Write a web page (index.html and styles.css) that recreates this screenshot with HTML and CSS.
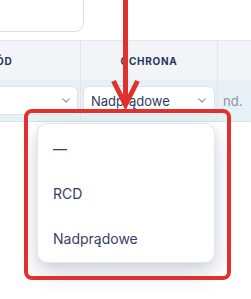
FILE: index.html
```html
<!DOCTYPE html>
<html lang="pl">
<head>
    <meta charset="UTF-8">
    <meta name="viewport" content="width=device-width, initial-scale=1.0">
    <title>Ochrona - wybór</title>
    <link rel="stylesheet" href="styles.css">
</head>
<body>

<div class="page">
    <div class="top-card"></div>

    <div class="table">
        <div class="thead">
            <div class="th col-circuit">Obwód</div>
            <div class="th col-protect">Ochrona</div>
            <div class="th col-rest"></div>
        </div>
        <div class="trow">
            <div class="td col-circuit">
                <div class="select">
                    <span class="select-value"></span>
                    <svg class="chevron" width="8" height="5" viewBox="0 0 8 5"><path d="M0.8 0.8 L4 4 L7.2 0.8" fill="none" stroke="#8d9ab2" stroke-width="1.2" stroke-linecap="round" stroke-linejoin="round"/></svg>
                </div>
            </div>
            <div class="td col-protect">
                <div class="select">
                    <span class="select-value">Nadprądowe</span>
                    <svg class="chevron" width="8" height="5" viewBox="0 0 8 5"><path d="M0.8 0.8 L4 4 L7.2 0.8" fill="none" stroke="#8d9ab2" stroke-width="1.2" stroke-linecap="round" stroke-linejoin="round"/></svg>
                </div>
            </div>
            <div class="td col-rest">
                <span class="muted">nd.</span>
            </div>
        </div>
    </div>

    <!-- open dropdown of the "Ochrona" select -->
    <ul class="menu">
        <li class="menu-item">—</li>
        <li class="menu-item">RCD</li>
        <li class="menu-item">Nadprądowe</li>
    </ul>

    <!-- annotation overlay -->
    <div class="callout"></div>
    <svg class="arrow" width="34" height="112" viewBox="0 0 34 112">
        <line x1="15.5" y1="0" x2="15.5" y2="104" stroke="#e0312f" stroke-width="5"/>
        <polyline points="3.5,81 15.5,105 27.5,81" fill="none" stroke="#e0312f" stroke-width="5" stroke-linejoin="miter"/>
    </svg>
</div>

</body>
</html>
```

FILE: styles.css
```css
body {
    margin: 0;
    background-color: #ffffff;
    font-family: 'Inter', 'Noto Sans', sans-serif;
}

.page {
    position: relative;
    width: 251px;
    height: 299px;
    overflow: hidden;
}

.top-card {
    box-sizing: border-box;
    width: 200px;
    height: 42px;
    margin: -10px 0 8px -116px;
    background-color: #ffffff;
    border: 1px solid #d9dfe8;
    border-radius: 9px;
}

.table {
    margin-left: -98px;
    width: 420px;
}

.thead,
.trow {
    display: flex;
}

.thead {
    box-sizing: border-box;
    height: 40px;
    background-color: #f2f4f8;
    border-top: 1px solid #e3e7ee;
}

.col-circuit {
    box-sizing: border-box;
    width: 179px;
    border-right: 1px solid #e1e6ed;
}

.col-protect {
    box-sizing: border-box;
    width: 137px;
    border-right: 1px solid #e1e6ed;
}

.col-rest {
    flex: 1;
}

.th {
    display: flex;
    align-items: center;
    justify-content: center;
    font-size: 10px;
    font-weight: 700;
    letter-spacing: 0.07em;
    text-transform: uppercase;
    color: #2a3658;
}

.trow {
    box-sizing: border-box;
    height: 42px;
    background-color: #e7f1f5;
    border-bottom: 1px dotted #c8d5de;
}

.td {
    display: flex;
    align-items: flex-start;
    padding: 6px 2px 0;
}

.select {
    box-sizing: border-box;
    flex: 1;
    height: 29px;
    display: flex;
    align-items: center;
    justify-content: space-between;
    padding: 0 8px 0 7px;
    background-color: #ffffff;
    border: 1px solid #dde4ec;
    border-radius: 6px;
}

.select-value {
    font-size: 13px;
    color: #2f3a5e;
}

.col-circuit .select {
    padding-right: 7px;
}

.chevron {
    display: block;
}

.col-rest {
    padding-left: 5px;
    align-items: center;
    padding-top: 0;
}

.muted {
    font-size: 13px;
    color: #8b95a8;
}

.menu {
    position: absolute;
    left: 37px;
    top: 123px;
    box-sizing: border-box;
    width: 178px;
    height: 140px;
    margin: 0;
    padding: 2px 0 3px;
    list-style: none;
    background-color: #ffffff;
    border: 1px solid #e4e6ee;
    border-radius: 10px;
    box-shadow: 0 10px 22px rgba(45, 50, 95, 0.2), 0 2px 6px rgba(45, 50, 95, 0.06);
}

.menu-item {
    height: 45px;
    display: flex;
    align-items: center;
    padding-left: 15px;
    font-size: 14px;
    color: #353f62;
}

.callout {
    position: absolute;
    left: 24px;
    top: 109px;
    box-sizing: border-box;
    width: 207px;
    height: 171px;
    border: 4.5px solid #e0312f;
    border-radius: 8px;
}

.arrow {
    position: absolute;
    left: 110px;
    top: 0;
}
```
